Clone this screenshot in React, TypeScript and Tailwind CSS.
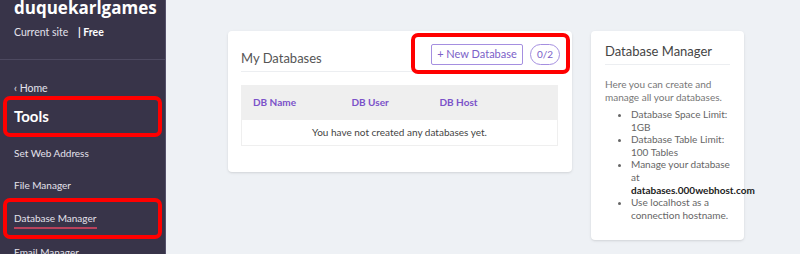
import React from 'react';

const body = { fontFamily: 'Lato, "Liberation Sans", sans-serif' };

const navItems = ['Set Web Address', 'File Manager'];

const Sidebar: React.FC = () => (
  <aside className="relative w-[166px] shrink-0 bg-[#383449] border-r border-[#55516a] text-white">
    <div className="px-[14px] h-[62px] border-b border-[#4d4960]">
      <div
        className="text-[17px] font-bold leading-[20px] -mt-[2px]"
        style={{ fontFamily: '"Open Sans", sans-serif' }}
      >
        duquekarlgames
      </div>
      <div className="mt-[7px] text-[10.5px] leading-[14px] text-[#e4e2ec]">
        Current site <span className="ml-[7px] font-bold text-white">| Free</span>
      </div>
    </div>
    <div className="px-[14px] pt-[21px] text-[10.5px] leading-[14px] text-[#e4e2ec]">‹ Home</div>
    <div className="relative mx-[3px] mt-[1px] h-[41px] flex items-center px-[11px]">
      <span className="text-[15px] font-bold">Tools</span>
      <div className="absolute inset-0 rounded-[7px] border-4 border-[#ff0000]" />
    </div>
    {navItems.map((item) => (
      <div key={item} className="px-[14px] h-[32px] flex items-center text-[10px] text-[#e4e2ec]">
        {item}
      </div>
    ))}
    <div className="relative mx-[3px] mt-[-3px] h-[41px] flex flex-col justify-center px-[11px]">
      <span className="text-[10px] leading-[13px] text-[#e4e2ec] mt-[4px]">Database Manager</span>
      <div className="mt-[2px] h-[2px] w-[83px] bg-[#b8425c]" />
      <div className="absolute inset-0 rounded-[7px] border-4 border-[#ff0000]" />
    </div>
    <div className="px-[14px] pt-[6px] text-[10px] text-[#e4e2ec]">Email Manager</div>
  </aside>
);

const MyDatabases: React.FC = () => (
  <div className="relative w-[344px] h-[141px] bg-white rounded-[4px] shadow-sm px-[13px]">
    <div className="flex items-end justify-between h-[41px] border-b border-[#eceef1] pb-[6px]">
      <h2 className="text-[13px] text-[#555] leading-[16px] mb-[-1px]">My Databases</h2>
      <div className="flex items-center gap-[7px] mr-[-1px]">
        <button className="h-[21px] w-[92px] border border-[#a58fe0] rounded-[2px] text-[11px] text-[#7b61c8]">
          + New Database
        </button>
        <span className="h-[21px] w-[30px] flex items-center justify-center rounded-full border border-[#a58fe0] text-[10px] text-[#7b61c8]">
          0/2
        </span>
      </div>
    </div>
    <table className="mt-[13px] w-[317px] text-[10px] border border-[#efefef]">
      <thead className="bg-[#efefef]">
        <tr className="h-[34px] text-left text-[#7b52c9] font-bold">
          <th className="pl-[11px] w-[110px]">DB Name</th>
          <th className="w-[88px]">DB User</th>
          <th>DB Host</th>
        </tr>
      </thead>
      <tbody>
        <tr className="h-[26px]">
          <td colSpan={3} className="text-center text-[#444]">You have not created any databases yet.</td>
        </tr>
      </tbody>
    </table>
    <div className="absolute left-[183px] top-[2px] w-[159px] h-[41px] rounded-[7px] border-4 border-[#ff0000]" />
  </div>
);

const InfoCard: React.FC = () => (
  <div className="w-[153px] h-[209px] bg-white rounded-[4px] shadow-sm px-[14px] pt-[11px]">
    <h2 className="text-[13px] text-[#444] leading-[18px] pb-[4px] border-b border-[#eceef1]">Database Manager</h2>
    <p className="mt-[13px] text-[10px] leading-[12.5px] text-[#777]">
      Here you can create and manage all your databases.
    </p>
    <ul className="mt-[5px] pl-[26px] list-disc text-[10px] leading-[12.6px] text-[#666]">
      <li>Database Space Limit: 1GB</li>
      <li>Database Table Limit: 100 Tables</li>
      <li>
        Manage your database at <b className="text-[#222] whitespace-nowrap">databases.000webhost.com</b>
      </li>
      <li>Use localhost as a connection hostname.</li>
    </ul>
  </div>
);

export default function App() {
  return (
    <div className="flex h-[254px] w-[800px] overflow-hidden bg-[#eef1f5]" style={body}>
      <Sidebar />
      <main className="flex items-start gap-[19px] pl-[62px] pt-[31px]">
        <MyDatabases />
        <InfoCard />
      </main>
    </div>
  );
}
